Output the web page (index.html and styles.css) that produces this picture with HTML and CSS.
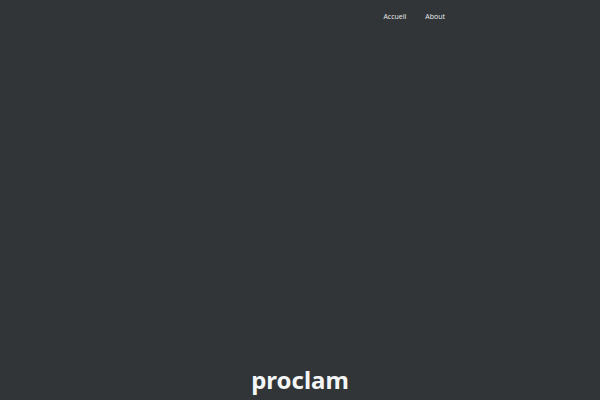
FILE: index.html
```html
<!DOCTYPE html>
<html lang="fr">
<head>
<meta charset="utf-8">
<link rel="stylesheet" href="styles.css">
</head>
<body>
<div class="page">
  <header class="top">
    <nav class="nav">
      <a class="nav-link" href="#">Accueil</a>
      <a class="nav-link" href="#">About</a>
    </nav>
  </header>
  <main class="hero">
    <h1 class="title">proclam</h1>
  </main>
</div>
</body>
</html>
```
FILE: styles.css
```css
html, body {
  margin: 0;
  padding: 0;
  background: #313538;
  height: 100%;
  overflow: hidden;
}
.page {
  height: 400px;
  display: flex;
  flex-direction: column;
  font-family: "Open Sans", sans-serif;
}
.top {
  display: flex;
  justify-content: flex-end;
  padding: 11px 155px 0 0;
}
.nav {
  display: flex;
  gap: 19px;
}
.nav-link {
  color: #eceeef;
  text-decoration: none;
  font-size: 7px;
  line-height: 12px;
}
.hero {
  flex: 1;
  display: flex;
  align-items: flex-end;
  justify-content: center;
}
.title {
  margin: 0 0 6px 0;
  color: #f4f5f5;
  font-family: "Noto Sans", sans-serif;
  font-weight: 700;
  font-size: 24px;
  line-height: 28px;
}
```
